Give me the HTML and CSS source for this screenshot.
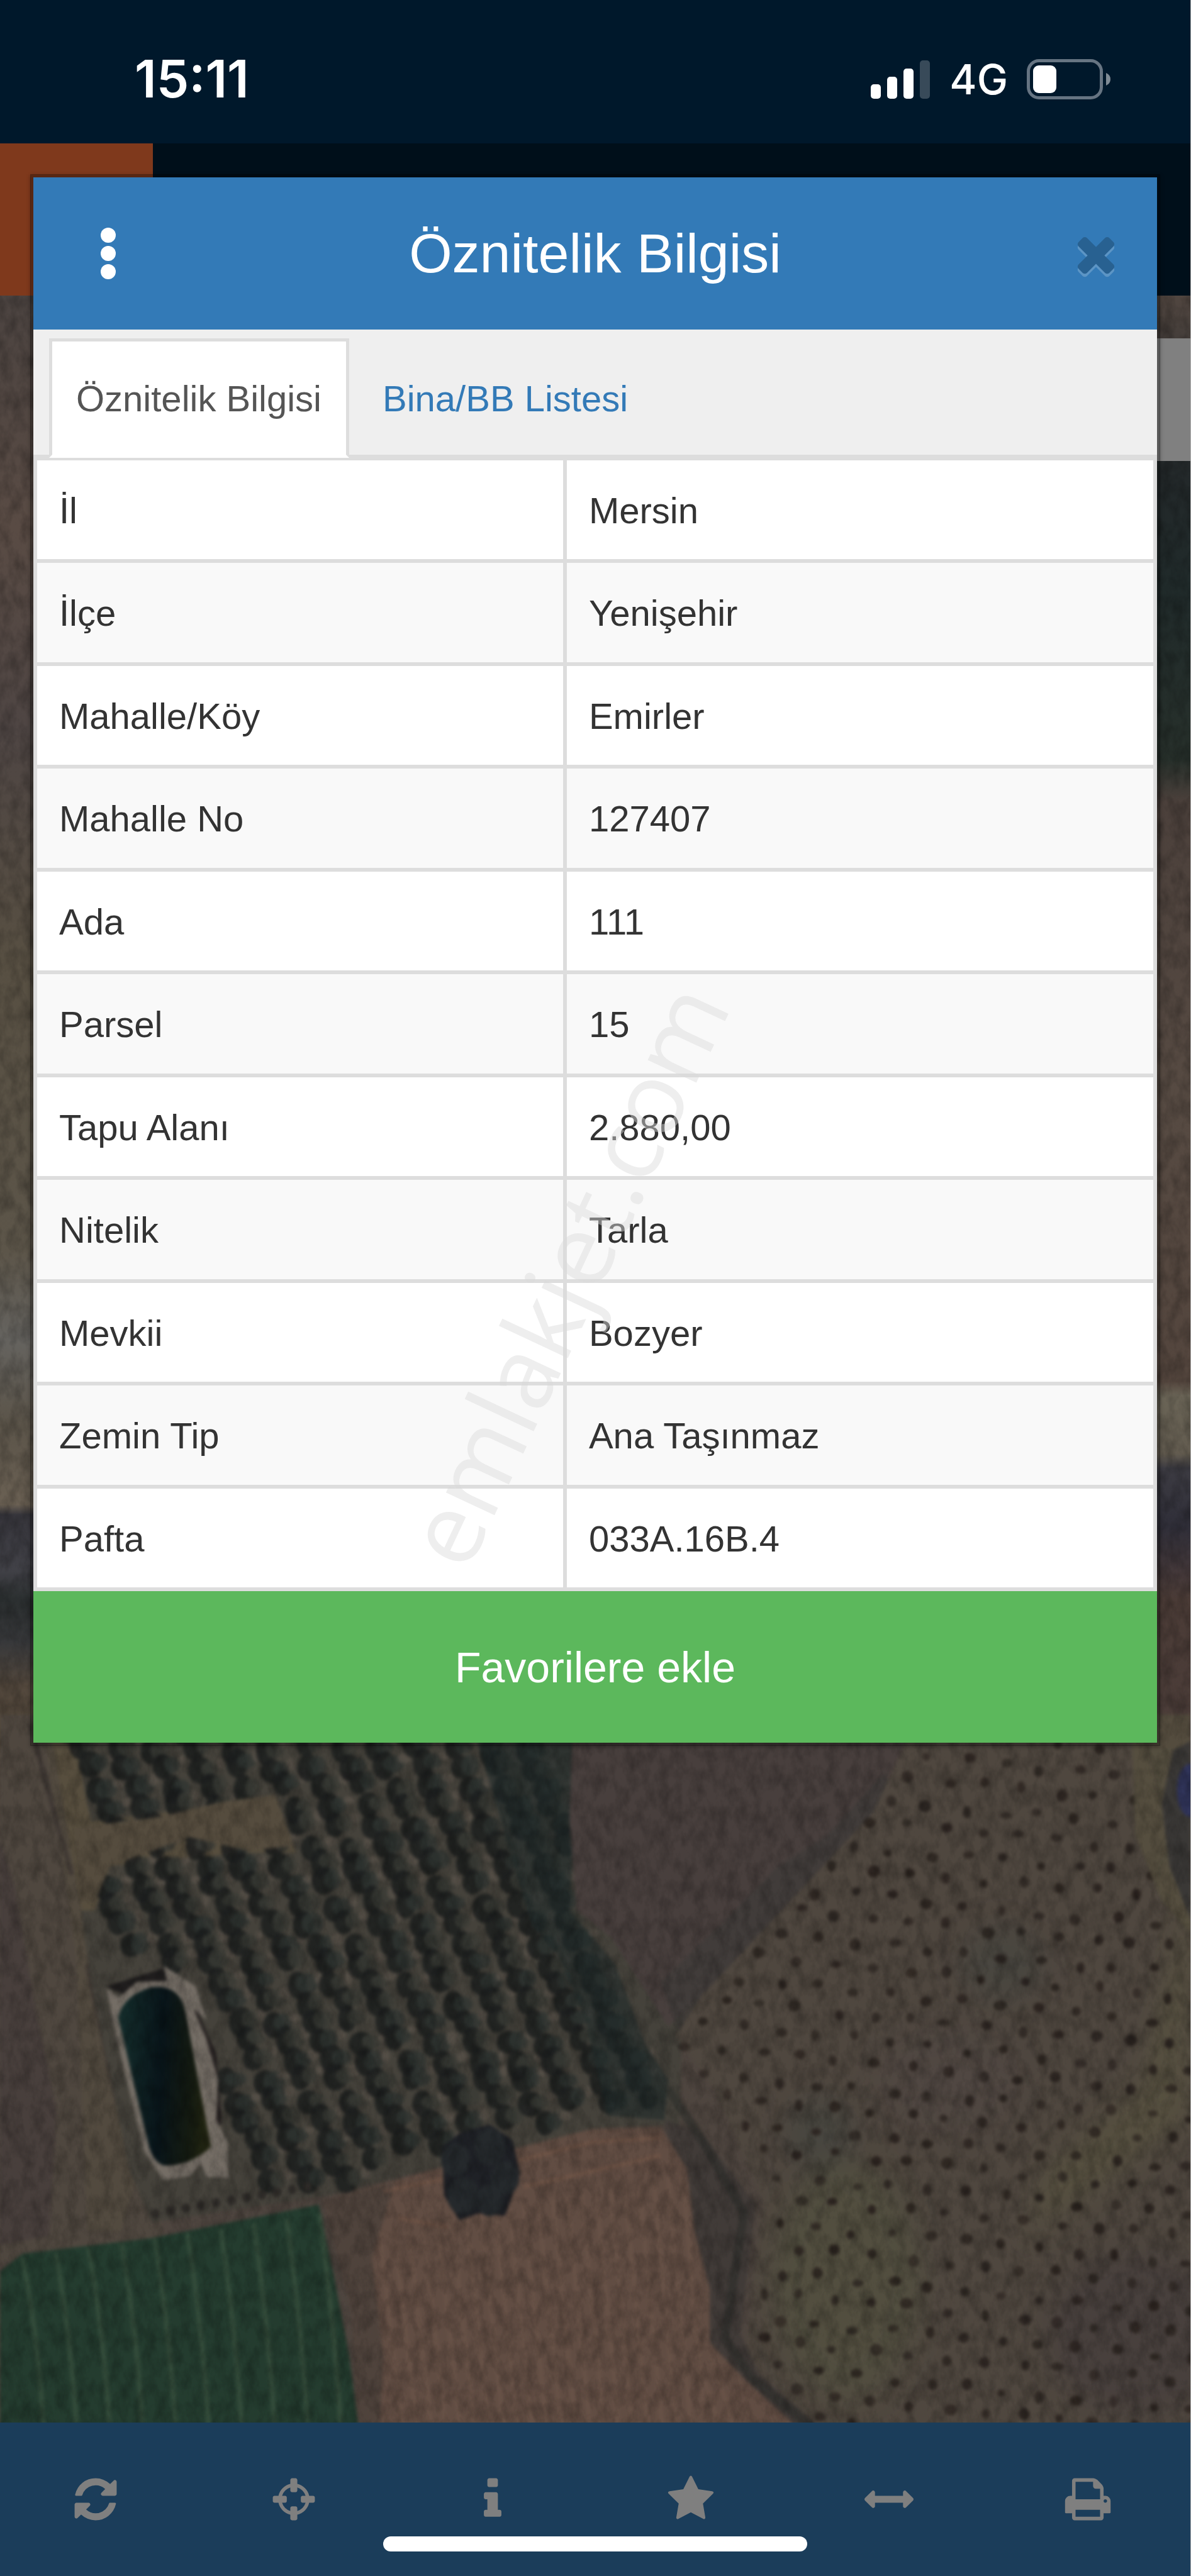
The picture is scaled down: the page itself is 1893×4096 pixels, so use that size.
FILE: index.html
```html
<!DOCTYPE html>
<html lang="tr">
<head>
<meta charset="utf-8">
<meta name="viewport" content="width=device-width, initial-scale=1">
<title>Öznitelik Bilgisi</title>
<link rel="stylesheet" href="styles.css">
</head>
<body>
<div class="app">
  <header class="status">
    <time class="status-time">15:11</time>
    <div class="status-icons">
      <svg class="signal" viewBox="0 0 95 61" aria-hidden="true">
        <rect x="0" y="38" width="16" height="23" rx="5"/>
        <rect x="26" y="26" width="16" height="35" rx="5"/>
        <rect x="52" y="13" width="16" height="48" rx="5"/>
        <rect x="78" y="0" width="16" height="61" rx="5" opacity=".22"/>
      </svg>
      <span class="network">4G</span>
      <svg class="battery" viewBox="0 0 134 64" aria-hidden="true">
        <rect x="2.500" y="2.500" width="116" height="59" rx="17" fill="none" stroke="#667482" stroke-width="5"/>
        <rect x="10" y="10" width="37" height="44" rx="9"/>
        <path d="M126 22q7 3 7 10t-7 10z" fill="#7f8b95"/>
      </svg>
    </div>
  </header>
  <div class="brand"><div class="brand-mark"></div></div>

  <main class="map">
    <svg class="map-image" viewBox="0 529 2130 3806" preserveAspectRatio="xMidYMid slice" aria-hidden="true">
      <defs>
        <linearGradient id="west" x1="0" y1="529" x2="0" y2="3120" gradientUnits="userSpaceOnUse">
          <stop offset="0" stop-color="#4b4340"/><stop offset=".16" stop-color="#594b44"/>
          <stop offset=".3" stop-color="#4e4543"/><stop offset=".46" stop-color="#574f42"/>
          <stop offset=".66" stop-color="#5c5549"/><stop offset=".72" stop-color="#65635f"/>
          <stop offset=".78" stop-color="#5b5449"/><stop offset=".835" stop-color="#6a6053"/>
          <stop offset=".842" stop-color="#36353b"/><stop offset=".88" stop-color="#414147"/>
          <stop offset=".9" stop-color="#2b2f30"/><stop offset=".93" stop-color="#37383a"/>
          <stop offset=".96" stop-color="#53483d"/><stop offset="1" stop-color="#554a3d"/>
        </linearGradient>
        <linearGradient id="east" x1="0" y1="529" x2="0" y2="3120" gradientUnits="userSpaceOnUse">
          <stop offset="0" stop-color="#514640"/><stop offset=".1" stop-color="#24282a"/>
          <stop offset=".2" stop-color="#202a2a"/><stop offset=".32" stop-color="#27302b"/>
          <stop offset=".35" stop-color="#4b403b"/><stop offset=".55" stop-color="#564a42"/>
          <stop offset=".75" stop-color="#53453d"/><stop offset=".76" stop-color="#6a6456"/>
          <stop offset=".8" stop-color="#625b4f"/><stop offset=".81" stop-color="#3c3b42"/>
          <stop offset=".85" stop-color="#2f2e38"/><stop offset=".88" stop-color="#43383a"/>
          <stop offset=".9" stop-color="#4a3b36"/><stop offset="1" stop-color="#4b3d39"/>
        </linearGradient>
        <linearGradient id="water" x1="0" y1="0" x2="1" y2=".1">
          <stop offset="0" stop-color="#16302e"/><stop offset=".5" stop-color="#09151a"/>
          <stop offset=".85" stop-color="#151b11"/><stop offset="1" stop-color="#222512"/>
        </linearGradient>
        <filter id="soft" x="0" y="0" width="1" height="1" color-interpolation-filters="sRGB"><feGaussianBlur stdDeviation="4"/></filter>
        <filter id="haze" color-interpolation-filters="sRGB"><feGaussianBlur stdDeviation="34"/></filter>
        <filter id="grain" x="0" y="0" width="1" height="1" color-interpolation-filters="sRGB">
          <feTurbulence type="fractalNoise" baseFrequency=".05 .03" numOctaves="4" seed="7"/>
          <feColorMatrix values="0 0 0 0 0  0 0 0 0 0  0 0 0 0 0  1.400 0 0 0 -.500"/>
        </filter>
      </defs>
      <rect x="0" y="529" width="2130" height="3806" fill="#4e453f"/>
      <rect x="0" y="529" width="1065" height="2600" fill="url(#west)"/>
      <rect x="1065" y="529" width="1065" height="2600" fill="url(#east)"/>
      <g transform="translate(0 3100) scale(.6792 .7972)">
        <g filter="url(#soft)">
          <path d="M0-40H230L430 1140 0 1190Z" fill="#4f473f"/>
          <path d="M0 240 40 350 90 600 150 850 130 1130 0 1150Z" fill="#483f3c"/>
          <path d="M110-40H190L280 420 360 1000 320 1120 230 1120 200 500Z" fill="#524a3f"/>
          <path d="M80-20 150 200 190 320M230 520 300 800 370 1010" fill="none" stroke="#393231" stroke-width="12" opacity=".7"/>
          <path d="M145-20H1560L1800 560 1790 880 1560 890 860 1040 400 1100 340 980 240 560Z" fill="#45423b"/>
          <path d="M130-30H185L240 200 560 165 730 150 780 270 640 270 290 300 250 400 215 400Z" fill="#574e3e"/>
          <g id="orchard"></g>
          <path d="M195 215 420 190 590 155 725 140 775 255 650 265 500 235 290 300 250 380 215 380Z" fill="#554c3e"/>
          <path d="M1250 0H1530L1500 400 1620 520 1700 700 1760 780 1750 870 1600 860 1540 640 1470 500 1400 430Z" fill="#20292a" opacity=".6"/>
          <path d="M1510-40H2420L2300 180 1850 590 1760 660 1610 460 1520 400 1500 200Z" fill="#483f3d"/>
          <path d="M2330 90 2180 230 2050 300 1900 430 1740 560 1790 680 1850 590 2120 370 2360 150Z" fill="#3e3c39" opacity=".7"/>
          <path d="M2420-40H2990L3136 420V1560H2120L1960 1420 2010 1050 1880 800 1780 680 1850 590 2300 180Z" fill="#4f473f"/>
          <g filter="url(#haze)">
            <ellipse cx="2230" cy="1230" rx="200" ry="270" fill="#535040" opacity=".8"/>
            <path d="M3136 300 3000 800 2750 980 2700 1130 2900 1020 3136 860Z" fill="#565040"/>
            <ellipse cx="2640" cy="520" rx="110" ry="80" fill="#494640"/>
            <ellipse cx="2160" cy="900" rx="90" ry="80" fill="#484640"/>
            <ellipse cx="3000" cy="1350" rx="240" ry="180" fill="#48403d"/>
            <ellipse cx="2500" cy="780" rx="180" ry="110" fill="#504742"/>
          </g>
          <g id="saplings"></g>
          <path d="M2980-40H3136V450L3060 380 2990 230Z" fill="#565040" opacity=".8"/>
          <path d="M3090 40 3136 20V420L3080 300 3060 160Z" fill="#3a3836"/>
          <ellipse cx="3136" cy="130" rx="36" ry="60" fill="#303459"/>
          <path d="M1750 870 1850 900 1990 1060 1950 1350 2000 1440 2160 1560 2040 1560 1880 1400 1800 1100Z" fill="#413b38"/>
          <path d="M1760 800 1860 930 1960 1080 1930 1240 1910 1360 1980 1450 2140 1560" fill="none" stroke="#2c2d2a" stroke-width="22" opacity=".6"/>
          <path d="M850 1050 1150 980 1560 890 1740 885 1810 980 1830 1120 1870 1250 1870 1370 1960 1450 2100 1560H940L930 1300Z" fill="#614d43"/>
          <path d="M850 1050 1040 1010 980 1180 1010 1400 1000 1560H940L925 1300Z" fill="#4f433c"/>
          <path d="M1010 1030 1180 1000 1560 920 1740 910M1380 1020 1740 950M1050 1090 1180 1110" fill="none" stroke="#75594a" stroke-width="10" opacity=".6"/>
          <g id="furrows" fill="none" stroke="#765f51" stroke-width="9" opacity=".38"></g>
          <path d="M0 1210 60 1170 400 1135 840 1060 880 1220 920 1400 945 1560H0Z" fill="#243c2f"/>
          <g id="crops" fill="none" stroke="#435a46" stroke-width="13" opacity=".5"></g>
          <path d="M280 570 430 530 450 560 330 590Z" fill="#1f1d1d"/>
          <path d="M500 590 570 720 585 880 550 880 540 720Z" fill="#241f1f"/>
          <path d="M282 575 315 595 360 560 440 558 432 524 515 570 545 645 510 620 545 690 575 780 570 870 600 920 602 1000 545 998 530 968 500 996 430 1005 380 940 345 820 295 640Z" fill="#746d65"/>
          <path d="M312 640Q325 590 400 572 470 565 487 620L556 930Q500 975 430 972 400 960 390 920Z" fill="url(#water)"/>
          <path d="M1165 930 1210 900 1290 880 1350 915 1370 990 1330 1085 1260 1080 1210 1095 1170 1040Z" fill="#1f2126"/>
          <g fill="#25292c"><circle cx="1200" cy="960" r="38"/><circle cx="1290" cy="930" r="42"/><circle cx="1330" cy="1000" r="38"/><circle cx="1220" cy="1040" r="42"/><circle cx="1290" cy="1050" r="36"/></g>
        </g>
      </g>
      <rect x="0" y="529" width="2130" height="3806" filter="url(#grain)" opacity=".32"/>
    </svg>
    <div class="map-panel"></div>
  </main>

  <nav class="toolbar" aria-label="Harita araçları">
    <button type="button" aria-label="Yenile"><svg viewBox="0 0 1792 1792"><path d="M1639 1056q0 5-1 7-64 268-268 434.500t-478 166.500q-146 0-282.500-55t-243.500-157l-129 129q-19 19-45 19t-45-19-19-45v-448q0-26 19-45t45-19h448q26 0 45 19t19 45-19 45l-137 137q71 66 161 102t187 36q134 0 250-65t186-179q11-17 53-117 8-23 30-23h192q13 0 22.500 9.500t9.500 22.500zm25-800v448q0 26-19 45t-45 19h-448q-26 0-45-19t-19-45 19-45l138-138q-148-137-349-137-134 0-250 65t-186 179q-11 17-53 117-8 23-30 23h-199q-13 0-22.500-9.500t-9.500-22.500v-7q65-268 270-434.500t480-166.500q146 0 284 55.500t245 156.500l130-129q19-19 45-19t45 19 19 45z"/></svg></button>
    <button type="button" aria-label="Konum"><svg viewBox="0 0 1792 1792"><path d="M1325 1024h-109q-26 0-45-19t-19-45v-128q0-26 19-45t45-19h109q-32-108-112.500-188.500t-188.500-112.500v109q0 26-19 45t-45 19h-128q-26 0-45-19t-19-45v-109q-108 32-188.500 112.500t-112.500 188.500h109q26 0 45 19t19 45v128q0 26-19 45t-45 19h-109q32 108 112.500 188.500t188.500 112.500v-109q0-26 19-45t45-19h128q26 0 45 19t19 45v109q108-32 188.500-112.500t112.500-188.500zm339-192v128q0 26-19 45t-45 19h-143q-37 161-154.500 278.500t-278.500 154.500v143q0 26-19 45t-45 19h-128q-26 0-45-19t-19-45v-143q-161-37-278.500-154.500t-154.500-278.500h-143q-26 0-45-19t-19-45v-128q0-26 19-45t45-19h143q37-161 154.500-278.500t278.500-154.500v-143q0-26 19-45t45-19h128q26 0 45 19t19 45v143q161 37 278.500 154.500t154.500 278.500h143q26 0 45 19t19 45z"/></svg></button>
    <button type="button" aria-label="Bilgi"><svg viewBox="0 0 1792 1792"><path d="M1216 1344v128q0 26-19 45t-45 19h-512q-26 0-45-19t-19-45v-128q0-26 19-45t45-19h64v-384h-64q-26 0-45-19t-19-45v-128q0-26 19-45t45-19h384q26 0 45 19t19 45v576h64q26 0 45 19t19 45zm-128-1152v192q0 26-19 45t-45 19h-256q-26 0-45-19t-19-45v-192q0-26 19-45t45-19h256q26 0 45 19t19 45z"/></svg></button>
    <button type="button" aria-label="Favoriler"><svg viewBox="0 0 1792 1792"><path d="M1728 647q0 22-26 48l-363 354 86 500q1 7 1 20 0 21-10.500 35.500t-30.500 14.500q-19 0-40-12l-449-236-449 236q-22 12-40 12-21 0-31.500-14.500t-10.500-35.500q0-6 2-20l86-500-364-354q-25-27-25-48 0-37 56-46l502-73 225-455q19-41 49-41t49 41l225 455 502 73q56 9 56 46z"/></svg></button>
    <button type="button" aria-label="Ölçüm"><svg viewBox="0 0 1792 1792"><path d="M1792 896q0 26-19 45l-256 256q-19 19-45 19t-45-19-19-45v-128h-1024v128q0 26-19 45t-45 19-45-19l-256-256q-19-19-19-45t19-45l256-256q19-19 45-19t45 19 19 45v128h1024v-128q0-26 19-45t45-19 45 19l256 256q19 19 19 45z"/></svg></button>
    <button type="button" aria-label="Yazdır"><svg viewBox="0 0 1792 1792"><path d="M448 1536h896v-256h-896v256zm0-640h896v-384h-160q-40 0-68-28t-28-68v-160h-640v640zm1152 64q0-26-19-45t-45-19-45 19-19 45 19 45 45 19 45-19 19-45zm128 0v416q0 13-9.500 22.500t-22.500 9.500h-224v160q0 40-28 68t-68 28h-960q-40 0-68-28t-28-68v-160h-224q-13 0-22.500-9.500t-9.500-22.500v-416q0-79 56.500-135.500t135.500-56.500h64v-544q0-40 28-68t68-28h672q40 0 88 20t76 48l152 152q28 28 48 76t20 88v256h64q79 0 135.500 56.500t56.500 135.500z"/></svg></button>
    <div class="home-indicator"></div>
  </nav>

  <section class="dialog" role="dialog" aria-labelledby="dialog-title">
    <header class="dialog-header">
      <button type="button" class="menu" aria-label="Menü"><svg viewBox="0 0 24 82"><circle cx="12" cy="12" r="12"/><circle cx="12" cy="41" r="12"/><circle cx="12" cy="70" r="12"/></svg></button>
      <h1 class="dialog-title" id="dialog-title">Öznitelik Bilgisi</h1>
      <button type="button" class="close" aria-label="Kapat"><svg viewBox="0 0 1792 1792"><path d="M1490 1322q0 40-28 68l-136 136q-28 28-68 28t-68-28l-294-294-294 294q-28 28-68 28t-68-28l-136-136q-28-28-28-68t28-68l294-294-294-294q-28-28-28-68t28-68l136-136q28-28 68-28t68 28l294 294 294-294q28-28 68-28t68 28l136 136q28 28 28 68t-28 68l-294 294 294 294q28 28 28 68z"/></svg></button>
    </header>
    <nav class="tabs">
      <a class="tab active" href="#oznitelik">Öznitelik Bilgisi</a>
      <a class="tab" href="#bina">Bina/BB Listesi</a>
    </nav>
    <table class="attributes" id="oznitelik">
      <tbody>
        <tr><th scope="row">İl</th><td>Mersin</td></tr>
        <tr><th scope="row">İlçe</th><td>Yenişehir</td></tr>
        <tr><th scope="row">Mahalle/Köy</th><td>Emirler</td></tr>
        <tr><th scope="row">Mahalle No</th><td>127407</td></tr>
        <tr><th scope="row">Ada</th><td>111</td></tr>
        <tr><th scope="row">Parsel</th><td>15</td></tr>
        <tr><th scope="row">Tapu Alanı</th><td>2.880,00</td></tr>
        <tr><th scope="row">Nitelik</th><td>Tarla</td></tr>
        <tr><th scope="row">Mevkii</th><td>Bozyer</td></tr>
        <tr><th scope="row">Zemin Tip</th><td>Ana Taşınmaz</td></tr>
        <tr><th scope="row">Pafta</th><td>033A.16B.4</td></tr>
      </tbody>
    </table>
    <button type="button" class="favorite">Favorilere ekle</button>
  </section>

  <div class="watermark"><span>emlakjet.com</span></div>
</div>
<script src="map.js"></script>
</body>
</html>
```
FILE: styles.css
```css
* { box-sizing: border-box; }

body {
  margin: 0;
  background: #00182b;
  color: #333;
  font: 58px/84px "Liberation Sans", Arial, sans-serif;
}

button {
  border: 0;
  padding: 0;
  background: none;
  color: inherit;
  font: inherit;
}

svg { display: block; }

.app {
  position: relative;
  display: flex;
  flex-direction: column;
  min-height: 100vh;
  overflow: hidden;
  border-right: 1px solid #b5b5b5;
}

/* Phone status bar */
.status {
  display: flex;
  align-items: center;
  justify-content: space-between;
  height: 228px;
  padding: 24px 126px 0 214px;
  background: #00182b;
  color: #fff;
}
.status-time { font: 600 82px/84px Inter, sans-serif; }
.status-icons { display: flex; align-items: center; gap: 30px; }
.signal { width: 95px; height: 61px; fill: #fff; }
.network { font: 500 66px/70px Inter, sans-serif; }
.battery { width: 134px; height: 64px; fill: #fff; }

/* Application bar behind the dialog */
.brand { height: 242px; background: #000f1a; }
.brand-mark { width: 243px; height: 100%; background: #7f391c; }

.map { position: relative; flex: 1; background: #4e453f; }
.map-image { position: absolute; inset: 0; width: 100%; height: 100%; }
.map-panel {
  position: absolute;
  top: 68px;
  right: 0;
  width: 200px;
  height: 195px;
  background: #808080;
}

.toolbar {
  position: relative;
  display: grid;
  grid-template-columns: repeat(6, 1fr);
  height: 244px;
  background: #1b3d5a;
}
.toolbar button {
  display: grid;
  place-items: center;
  padding-right: 11px;
}
.toolbar svg { width: 78px; height: 78px; fill: #7f7f7f; }
.home-indicator {
  position: absolute;
  bottom: 39px;
  left: 50%;
  width: 674px;
  height: 24px;
  margin-left: -337px;
  border-radius: 12px;
  background: #fff;
}

/* Dialog */
.dialog {
  position: absolute;
  top: 277px;
  left: 48px;
  right: 48px;
  border: 5px solid rgba(0, 0, 0, .3);
  background: #fff;
  background-clip: padding-box;
  box-shadow: 0 2px 6px rgba(0, 0, 0, .3);
}
.dialog-header {
  display: grid;
  grid-template-columns: 110px 1fr 110px;
  align-items: center;
  height: 242px;
  padding: 0 53px;
  background: #337ab7;
  color: #fff;
}
.dialog-title { margin: 0; font: 88px/120px "Liberation Sans", Arial, sans-serif; text-align: center; }
.menu,
.close {
  display: grid;
  place-items: center;
  justify-self: end;
  width: 88px;
}
.menu svg { width: 24px; height: 82px; fill: #fff; }
.close svg {
  width: 88px;
  height: 88px;
  fill: #000;
  filter: drop-shadow(0 5px 0 #fff);
  opacity: .2;
}

.tabs {
  display: flex;
  gap: 10px;
  padding: 14px 25px 0;
  border-bottom: 5px solid #ddd;
  background: #efefef;
}
.tab {
  margin-bottom: -5px;
  padding: 49px 39px 47px 38px;
  border: 5px solid transparent;
  color: #337ab7;
  text-decoration: none;
}
.tab.active {
  border-color: #ddd #ddd #fff;
  background: #fff;
  color: #555;
}

.attributes {
  width: 100%;
  margin-top: -2px;
  border-collapse: collapse;
}
.attributes th,
.attributes td {
  padding: 38px 35px 35px;
  border: 6px solid #ddd;
  font-weight: 400;
  text-align: left;
}
.attributes th { width: 47.3%; }
.attributes tr:nth-child(even) { background: #f9f9f9; }
.attributes tr:nth-child(even) > * { padding-bottom: 36px; }

.favorite {
  display: block;
  width: 100%;
  height: 241px;
  background: #5cb85c;
  color: #fff;
  font-size: 68px;
}

/* Diagonal watermark centred on the page */
.watermark {
  position: absolute;
  inset: 0;
  display: grid;
  place-items: center;
  pointer-events: none;
}
.watermark span {
  padding-bottom: 106px;
  color: rgba(217, 217, 217, .45);
  font: 159px/160px "Open Sans", sans-serif;
  transform: rotate(-65deg);
}
```
FILE: map.js
```js
// Fills the aerial map with its repeating details: trees, saplings and furrows.
(function () {
  var NS = 'http://www.w3.org/2000/svg';
  var seed = 11;
  function rnd() {
    seed = (seed * 16807) % 2147483647;
    return seed / 2147483647;
  }
  function add(parent, name, attrs) {
    var el = document.createElementNS(NS, name);
    for (var k in attrs) el.setAttribute(k, attrs[k]);
    parent.appendChild(el);
  }
  function inside(x, y, poly) {
    var hit = false;
    for (var i = 0, j = poly.length - 1; i < poly.length; j = i++) {
      var a = poly[i], b = poly[j];
      if ((a[1] > y) !== (b[1] > y) && x < (b[0] - a[0]) * (y - a[1]) / (b[1] - a[1]) + a[0]) hit = !hit;
    }
    return hit;
  }

  var orchard = document.getElementById('orchard');
  var grove = [[180, -20], [1480, -20], [1540, 420], [1640, 540], [1770, 800], [1760, 860], [1560, 860],
    [1140, 950], [860, 1020], [640, 1030], [620, 900], [590, 720], [540, 590], [430, 500], [260, 520],
    [280, 320], [210, 190]];
  for (var r = -8; r < 18; r++) {
    for (var y = -20; y < 1050; y += 44) {
      var x = 100 + r * 98 + y * 0.52 + rnd() * 18;
      var ty = y + rnd() * 20;
      if (!inside(x, ty, grove)) continue;
      add(orchard, 'ellipse', { cx: x - 10, cy: ty, rx: 24 + rnd() * 9, ry: 26 + rnd() * 8,
        fill: '#1c1f1f', opacity: 0.85 });
      add(orchard, 'ellipse', { cx: x + 14, cy: ty - 4, rx: 18 + rnd() * 12, ry: 15 + rnd() * 10,
        fill: rnd() > 0.5 ? '#3a3b36' : '#2f3532', opacity: 0.8 });
      if (rnd() > 0.3) {
        add(orchard, 'ellipse', { cx: x + 38 + rnd() * 10, cy: ty - 16, rx: 9 + rnd() * 9, ry: 8 + rnd() * 8,
          fill: '#57514a', opacity: 0.8 });
      }
    }
  }
  for (var i = 0; i < 11; i++) {
    add(orchard, 'circle', { cx: 410 + i * 40, cy: 1080 - i * 6, r: 11, fill: '#2d2a27' });
  }

  var saplings = document.getElementById('saplings');
  var field = [[2400, 10], [2970, 10], [3000, 230], [3136, 440], [3140, 1560], [2150, 1560], [1960, 1400],
    [2020, 1050], [1880, 830], [1790, 700], [1860, 600], [2300, 180]];
  for (var row = -12; row < 34; row++) {
    for (var c = 0; c < 16; c++) {
      var sx = 1760 + c * 98 + (row % 2 ? 48 : 0) + (rnd() - 0.5) * 22;
      var sy = row * 54 + c * 8 + (rnd() - 0.5) * 18;
      if (!inside(sx, sy, field)) continue;
      add(saplings, 'ellipse', { cx: sx, cy: sy, rx: 10 + rnd() * 7, ry: 8 + rnd() * 6,
        fill: '#29221e', opacity: 0.65 + rnd() * 0.3 });
    }
  }

  var furrows = document.getElementById('furrows');
  for (var f = 0; f < 24; f++) {
    var fx = 1000 + f * 38;
    var top = fx > 1820 ? 1400 : 1120 - f * 6;
    add(furrows, 'path', { d: 'M' + fx + ' ' + top + ' L' + (fx + 60) + ' 1560' });
  }
  var crops = document.getElementById('crops');
  for (var g = 0; g < 10; g++) {
    var gx = 60 + g * 87;
    add(crops, 'path', { d: 'M' + gx + ' ' + (1180 - g * 11) + ' Q' + (gx + 40) + ' 1350 ' + (gx + 55) + ' 1560' });
  }
})();
```
